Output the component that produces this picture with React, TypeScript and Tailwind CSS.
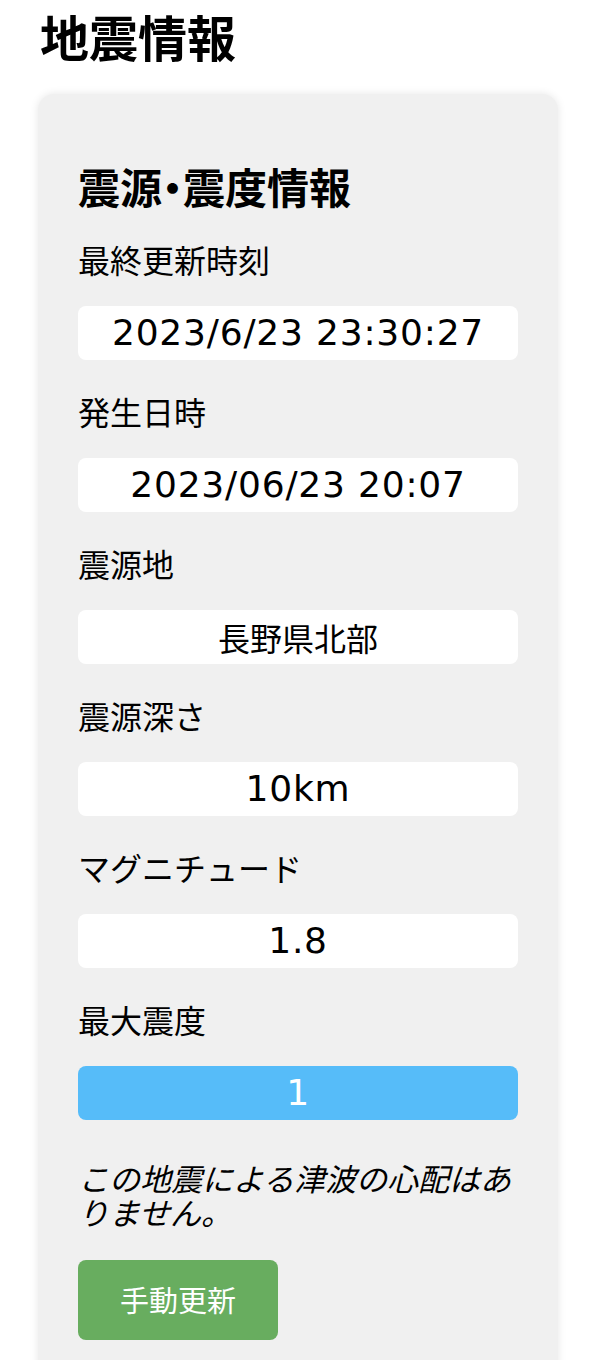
const items: { label: string; value: string; latin?: boolean; accent?: boolean }[] = [
  { label: '最終更新時刻', value: '2023/6/23 23:30:27', latin: true },
  { label: '発生日時', value: '2023/06/23 20:07', latin: true },
  { label: '震源地', value: '長野県北部' },
  { label: '震源深さ', value: '10km', latin: true },
  { label: 'マグニチュード', value: '1.8', latin: true },
  { label: '最大震度', value: '1', latin: true, accent: true },
];

const App: React.FC = () => {
  return (
    <div className="min-h-[1360px] bg-white text-black font-['Noto_Sans_CJK_JP',sans-serif] overflow-hidden">
      <h1 className="pl-[40px] pt-[8px] text-[49px] leading-[56px] font-bold">地震情報</h1>
      <div className="mt-[30px] ml-[38px] w-[520px] rounded-[16px] bg-[#f0f0f0] shadow-[0_0_8px_rgba(0,0,0,0.1)] px-[40px] pt-[66px] pb-[40px]">
        <h2 className="text-[42px] leading-[52px] font-bold [font-feature-settings:'palt']">震源・震度情報</h2>
        <div className="mt-[23px]">
          {items.map((item) => (
            <div key={item.label} className="mb-[27px]">
              <p className="text-[32px] leading-[48px]">{item.label}</p>
              <div
                className={
                  item.accent
                    ? 'mt-[23px] h-[54px] rounded-[8px] bg-[#56bcf9] text-white flex items-center justify-center'
                    : 'mt-[23px] h-[54px] rounded-[8px] bg-white flex items-center justify-center'
                }
              >
                {item.latin ? (
                  <span className="font-['DejaVu_Sans',sans-serif] text-[36px] tracking-[0.8px] leading-none">{item.value}</span>
                ) : (
                  <span className="text-[32px] leading-none">{item.value}</span>
                )}
              </div>
            </div>
          ))}
        </div>
        <p className="mt-[41px] text-[31px] leading-[34px] italic">
          この地震による津波の心配はありません。
        </p>
        <button className="mt-[31px] w-[200px] h-[80px] rounded-[8px] bg-[#68ad5f] text-white text-[29px]">
          手動更新
        </button>
      </div>
    </div>
  );
};

export default App;
